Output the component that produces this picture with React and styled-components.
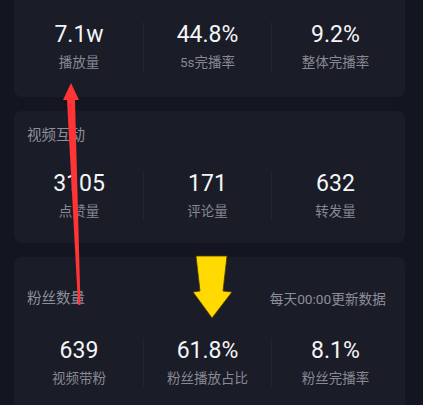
import React from "react";
import styled, { createGlobalStyle } from "styled-components";

const GlobalStyle = createGlobalStyle`
  html, body {
    margin: 0;
    padding: 0;
    background: #131520;
  }
  body {
    font-family: Roboto, "Noto Sans CJK SC", sans-serif;
    -webkit-font-smoothing: antialiased;
  }
`;

const Page = styled.div`
  position: relative;
  width: 423px;
  height: 405px;
  overflow: hidden;
  background: #131520;
  display: flex;
  flex-direction: column;
  gap: 14px;
  padding: 0 18px 0 14px;
  box-sizing: border-box;
`;

const Card = styled.section`
  background: #1a1c28;
  border-radius: ${(p) => (p.$cut ? "0 0 8px 8px" : "8px")};
  padding: ${(p) => p.$pad};
  flex-shrink: 0;
`;

const Header = styled.div`
  display: flex;
  justify-content: space-between;
  align-items: center;
  height: 20px;
  padding: 0 19px 0 13px;
  margin-bottom: ${(p) => p.$gap}px;
`;

const Title = styled.span`
  font-size: 14.5px;
  color: #8d8f98;
  line-height: 20px;
`;

const Note = styled.span`
  font-size: 13.7px;
  color: #8d8f98;
  line-height: 20px;
`;

const StatRow = styled.div`
  display: grid;
  grid-template-columns: repeat(3, 128px);
  padding-left: 1px;
`;

const Stat = styled.div`
  display: flex;
  flex-direction: column;
  align-items: center;
  gap: 5px;
  border-left: ${(p) => (p.$first ? "none" : "1px solid #222430")};
`;

const Value = styled.div`
  font-size: 23px;
  font-weight: 400;
  color: #f4f5f7;
  line-height: 26px;
`;

const Label = styled.div`
  font-size: 13.5px;
  color: #878993;
  line-height: 18px;
`;

const Overlay = styled.svg`
  position: absolute;
  left: 0;
  top: 0;
  pointer-events: none;
`;

const Stats = ({ items }) => (
  <StatRow>
    {items.map(([v, l], i) => (
      <Stat key={l} $first={i === 0}>
        <Value>{v}</Value>
        <Label>{l}</Label>
      </Stat>
    ))}
  </StatRow>
);

export default function App() {
  return (
    <>
      <GlobalStyle />
      <Page>
        <Card $cut $pad="22px 0 26px">
          <Stats
            items={[
              ["7.1w", "播放量"],
              ["44.8%", "5s完播率"],
              ["9.2%", "整体完播率"],
            ]}
          />
        </Card>
        <Card $pad="15px 0 23px">
          <Header $gap={25}>
            <Title>视频互动</Title>
          </Header>
          <Stats
            items={[
              ["3105", "点赞量"],
              ["171", "评论量"],
              ["632", "转发量"],
            ]}
          />
        </Card>
        <Card $pad="32px 0 23px">
          <Header $gap={29}>
            <Title>粉丝数量</Title>
            <Note>每天00:00更新数据</Note>
          </Header>
          <Stats
            items={[
              ["639", "视频带粉"],
              ["61.8%", "粉丝播放占比"],
              ["8.1%", "粉丝完播率"],
            ]}
          />
        </Card>
        <Overlay width="423" height="405" viewBox="0 0 423 405">
          <polygon points="67,100 75,100 80.5,305 78,305" fill="#ff3434" />
          <polygon points="71,83 79,100 63,100" fill="#ff3434" />
          <polygon
            points="196,256 227,256 223,291 232,292 212,318 193,292 200,291"
            fill="#ffd900"
            stroke="#4a3d00"
            strokeWidth="0.8"
            strokeLinejoin="round"
          />
        </Overlay>
      </Page>
    </>
  );
}
